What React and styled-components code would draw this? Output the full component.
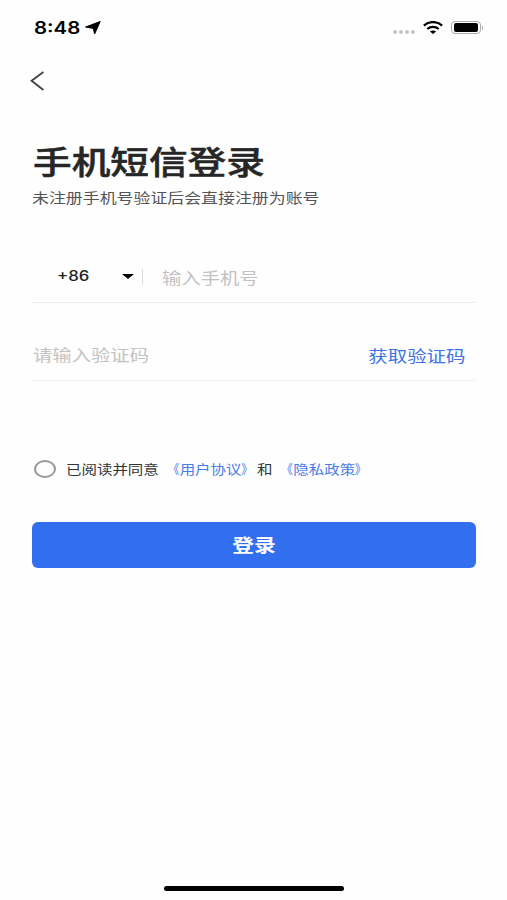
import React from 'react'
import styled, { createGlobalStyle } from 'styled-components'

function App() {
  return (
    <>
      <GlobalStyle />
      <Screen>
        <StatusBar>
          <Clock>
            <Time>8:48</Time>
            <svg width="16" height="14" viewBox="0 0 16 14">
              <path d="M15.2 0.5 L9.6 13 L8.3 7.4 L0.6 6 Z" fill="#000" stroke="#000" strokeWidth="1" strokeLinejoin="round" />
            </svg>
          </Clock>
          <Indicators>
            <Signal><i /><i /><i /><i /></Signal>
            <svg width="20" height="14" viewBox="0 0 20 14" fill="none" stroke="#000">
              <path d="M0.9 4.6 C5.8 -0.1 14.2 -0.1 19.1 4.6" strokeWidth="2.3" />
              <path d="M4.3 8 C7.4 5.2 12.6 5.2 15.7 8" strokeWidth="2.2" />
              <path d="M10 13 L6.9 10.5 C8.5 9.1 11.5 9.1 13.1 10.5 Z" fill="#000" stroke="none" />
            </svg>
            <Battery><Charge /></Battery>
          </Indicators>
        </StatusBar>

        <NavBar>
          <svg width="15" height="20" viewBox="0 0 15 20" fill="none">
            <path d="M13.4 1 L1.6 9.8 L13.4 19" stroke="#444" strokeWidth="1.9" />
          </svg>
        </NavBar>

        <Title><Wide>手机短信登录</Wide></Title>
        <Subtitle><Wide>未注册手机号验证后会直接注册为账号</Wide></Subtitle>

        <PhoneField>
          <AreaCode>+86</AreaCode>
          <Caret />
          <Divider />
          <Placeholder><Wide>输入手机号</Wide></Placeholder>
        </PhoneField>
        <CodeField>
          <Placeholder><Wide>请输入验证码</Wide></Placeholder>
          <GetCode><Wide $origin="right">获取验证码</Wide></GetCode>
        </CodeField>

        <Agreement>
          <Radio />
          <Wide>
            已阅读并同意
            <Link><Bracket $origin="right">《</Bracket>用户协议<Bracket>》</Bracket></Link>
            和
            <Link><Bracket $origin="right">《</Bracket>隐私政策<Bracket>》</Bracket></Link>
          </Wide>
        </Agreement>

        <LoginButton><Wide $origin="center">登录</Wide></LoginButton>

        <HomeIndicator />
      </Screen>
    </>
  )
}

export default App

const GlobalStyle = createGlobalStyle`
    * {
        box-sizing: border-box;
    }
    body {
        margin: 0;
        background: #fefefe;
        font-family: 'Noto Sans CJK SC', sans-serif;
    }
`

const Screen = styled.div`
    width: 507px;
    height: 900px;
    padding: 0 31px 0 32px;
    display: flex;
    flex-direction: column;
    background: #fefefe;
    overflow: hidden;
`

const Wide = styled.span`
    display: inline-block;
    white-space: nowrap;
    transform: scaleX(1.208);
    transform-origin: ${({ $origin }) => $origin || 'left'} center;
`

const StatusBar = styled.div`
    height: 55px;
    margin-right: -7px;
    display: flex;
    align-items: center;
    justify-content: space-between;
`

const Clock = styled.div`
    display: flex;
    align-items: center;
    gap: 13px;
    padding-left: 2px;
`

const Time = styled.span`
    width: 38px;
    font-family: Inter, sans-serif;
    font-size: 17px;
    font-weight: 600;
    line-height: 20px;
    transform: scaleX(1.2);
    transform-origin: left center;
`

const Indicators = styled.div`
    display: flex;
    align-items: center;
    gap: 8px;
`

const Signal = styled.div`
    display: flex;
    gap: 2px;
    padding-top: 8px;
    i {
        width: 4px;
        height: 4px;
        border-radius: 50%;
        background: #c4c4c4;
    }
`

const Battery = styled.div`
    position: relative;
    width: 30px;
    height: 13px;
    padding: 1px 2px;
    border: 1px solid #aaa;
    border-radius: 4px;
    margin-right: 2px;
    &::after {
        content: '';
        position: absolute;
        right: -3px;
        top: 4px;
        width: 1px;
        height: 4px;
        background: #aaa;
    }
`

const Charge = styled.div`
    height: 9px;
    border-radius: 2px;
    background: #000;
`

const NavBar = styled.div`
    height: 53px;
    margin-left: -2px;
    padding-bottom: 2px;
    display: flex;
    align-items: center;
`

const Title = styled.h1`
    margin: 29px 0 0 1px;
    font-size: 32px;
    font-weight: 500;
    line-height: 46px;
    color: #262626;
    -webkit-text-stroke: 0.5px #262626;
`

const Subtitle = styled.p`
    margin: 4px 0 0;
    font-size: 14px;
    line-height: 20px;
    color: #555;
`

const PhoneField = styled.div`
    height: 52px;
    margin-top: 44px;
    padding-left: 25px;
    display: flex;
    align-items: center;
    border-bottom: 1px solid #ebebeb;
`

const AreaCode = styled.span`
    width: 65px;
    padding-bottom: 1px;
    font-family: Inter, sans-serif;
    font-size: 14px;
    font-weight: 500;
    line-height: 20px;
    color: #222;
    transform: scaleX(1.2);
    transform-origin: left center;
`

const Caret = styled.span`
    border: 6px solid transparent;
    border-top: 5px solid #000;
    border-bottom: 0;
`

const Divider = styled.span`
    width: 1px;
    height: 16px;
    margin: 0 19px 0 8px;
    background: #ddd;
`

const Placeholder = styled.span`
    padding-top: 1px;
    font-size: 16px;
    line-height: 24px;
    color: #c2c2c2;
`

const CodeField = styled.div`
    height: 53px;
    margin-top: 25px;
    padding: 0 11px 1px 1px;
    display: flex;
    align-items: center;
    justify-content: space-between;
    border-bottom: 1px solid #f1f1f1;
`

const GetCode = styled.span`
    padding-top: 2px;
    font-size: 16.1px;
    line-height: 24px;
    color: #3d73e3;
`

const Agreement = styled.div`
    height: 22px;
    margin-top: 77px;
    padding: 0 0 1px 2px;
    display: flex;
    align-items: center;
    gap: 10px;
    font-size: 12.8px;
    line-height: 20px;
    color: #333;
    & > ${Wide} {
        display: inline-flex;
    }
`

const Radio = styled.span`
    width: 22px;
    height: 18px;
    border: 2px solid #999;
    border-radius: 50%;
`

const Link = styled.span`
    margin-left: 4.5px;
    color: #4a7ce8;
`

const Bracket = styled.span`
    display: inline-block;
    transform: scaleX(0.75);
    transform-origin: ${({ $origin }) => $origin || 'left'} center;
`

const LoginButton = styled.button`
    height: 46px;
    margin-top: 42px;
    padding: 0 0 2px;
    border: 0;
    border-radius: 6px;
    background: #326fee;
    color: #fff;
    font-family: inherit;
    font-size: 18px;
    font-weight: 700;
`

const HomeIndicator = styled.div`
    width: 180px;
    height: 5px;
    margin: auto auto 9px 132px;
    border-radius: 3px;
    background: #000;
`
